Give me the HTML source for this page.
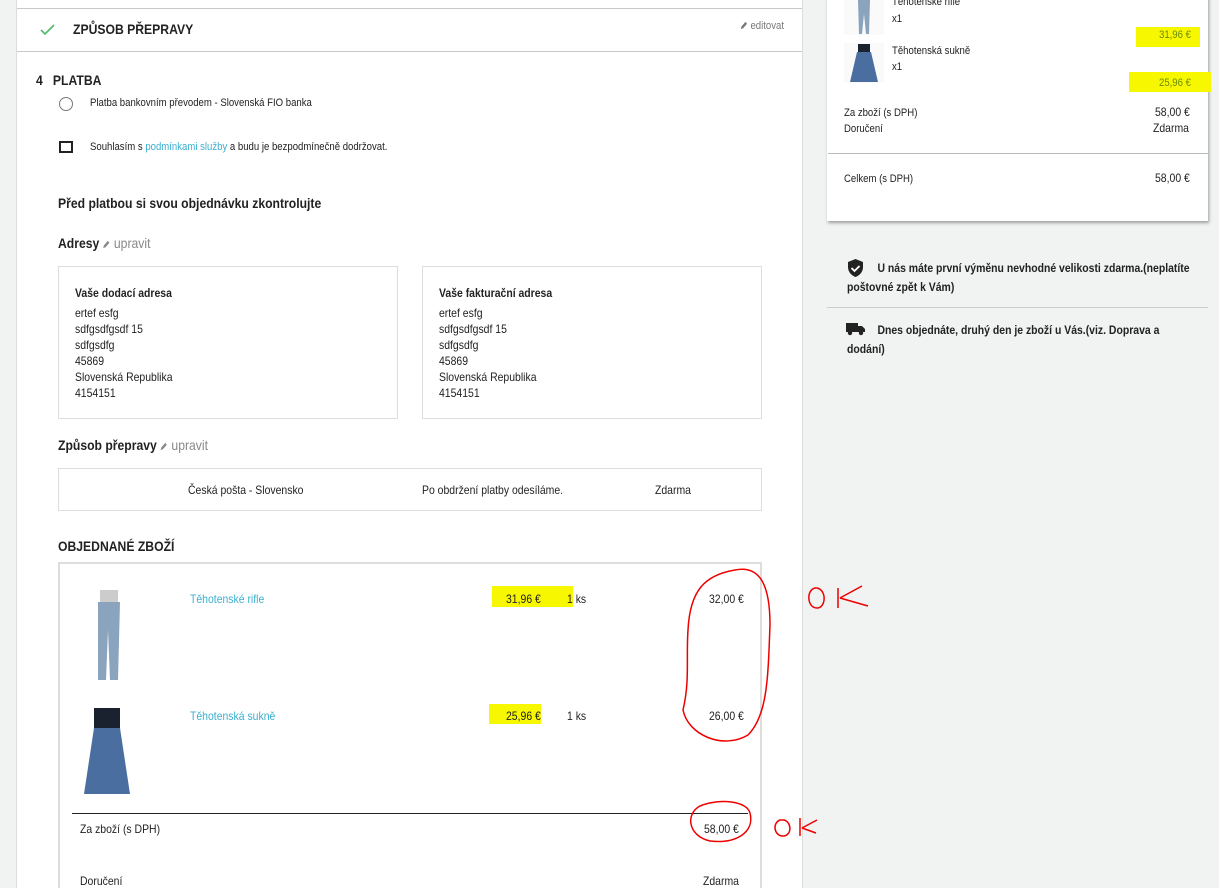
<!DOCTYPE html>
<html><head><meta charset="utf-8"><style>
*{margin:0;padding:0;box-sizing:border-box}
html,body{width:1219px;height:888px;overflow:hidden}
body{background:#f1f2f2;font-family:"Liberation Sans",sans-serif;color:#222;position:relative}
.a{position:absolute;white-space:nowrap;transform:scaleX(.87);transform-origin:left top}
.n{transform:none}
.main{position:absolute;left:16px;top:0;width:787px;height:888px;background:#fff;border-left:1px solid #ddd;border-right:1px solid #ddd}
.b{font-weight:bold}
.box{position:absolute;border:1px solid #ddd;background:#fff}
.link{color:#3bb0d0}
.hl{background:#f7f700}
.s11{font-size:11px}.s12{font-size:12px}.s13{font-size:13px}.s14{font-size:14px}
.pen{display:inline-block;width:9px;height:9px;vertical-align:-1px}
</style></head><body>
<div class="main">
 <div style="position:absolute;left:0;right:0;top:8px;border-top:1px solid #c8c8c8"></div>
 <div style="position:absolute;left:0;right:0;top:51px;border-top:1px solid #c8c8c8"></div>
</div>
<svg class="a n" style="left:40px;top:24px" width="16" height="12" viewBox="0 0 16 12"><path d="M1 6l4 4 9-9" fill="none" stroke="#4cbb6c" stroke-width="1.6"/></svg>
<div class="a b s14" style="left:73px;top:21px">ZPŮSOB PŘEPRAVY</div>
<div class="a s11" style="left:740px;top:20px;color:#777"><svg class="pen" viewBox="0 0 10 10"><path d="M1 9l1-3 5-5 2 2-5 5z" fill="#777"/></svg> editovat</div>
<div class="a b s14" style="left:36px;top:72px">4&nbsp;&nbsp; PLATBA</div>
<div class="a n" style="left:59px;top:97px;width:14px;height:14px;border:1.5px solid #777;border-radius:50%"></div>
<div class="a s11" style="left:90px;top:97px">Platba bankovním převodem - Slovenská FIO banka</div>
<div class="a n" style="left:59px;top:141px;width:14px;height:12px;border:2px solid #222"></div>
<div class="a s11" style="left:90px;top:141px">Souhlasím s <span class="link">podmínkami služby</span> a budu je bezpodmínečně dodržovat.</div>
<div class="a b s14" style="left:58px;top:195px">Před platbou si svou objednávku zkontrolujte</div>
<div class="a s14" style="left:58px;top:235px"><b>Adresy</b> <span style="color:#888"><svg class="pen" viewBox="0 0 10 10"><path d="M1 9l1-3 5-5 2 2-5 5z" fill="#888"/></svg> upravit</span></div>
<div class="box" style="left:58px;top:266px;width:340px;height:153px"></div>
<div class="box" style="left:422px;top:266px;width:340px;height:153px"></div>
<div class="a s12" style="left:75px;top:285px;line-height:16px"><b>Vaše dodací adresa</b><br><div style="height:4px"></div>ertef esfg<br>sdfgsdfgsdf 15<br>sdfgsdfg<br>45869<br>Slovenská Republika<br>4154151</div>
<div class="a s12" style="left:439px;top:285px;line-height:16px"><b>Vaše fakturační adresa</b><br><div style="height:4px"></div>ertef esfg<br>sdfgsdfgsdf 15<br>sdfgsdfg<br>45869<br>Slovenská Republika<br>4154151</div>
<div class="a s14" style="left:58px;top:437px"><b>Způsob přepravy</b> <span style="color:#888"><svg class="pen" viewBox="0 0 10 10"><path d="M1 9l1-3 5-5 2 2-5 5z" fill="#888"/></svg> upravit</span></div>
<div class="box" style="left:58px;top:468px;width:704px;height:43px"></div>
<div class="a s12" style="left:188px;top:483px">Česká pošta - Slovensko</div>
<div class="a s12" style="left:422px;top:483px">Po obdržení platby odesíláme.</div>
<div class="a s12" style="left:655px;top:483px">Zdarma</div>
<div class="a b s14" style="left:58px;top:538px">OBJEDNANÉ ZBOŽÍ</div>
<div class="box" style="left:58px;top:562px;width:704px;height:340px;border-width:2px;border-bottom:none"></div>
<svg class="a n" style="left:88px;top:590px" width="42" height="92" viewBox="0 0 42 92"><rect x="12" y="0" width="18" height="14" fill="#ccc"/><path d="M10 12h22l-2 78h-8l-2-50-2 50h-8z" fill="#8aa4bd"/></svg>
<svg class="a n" style="left:84px;top:708px" width="46" height="92" viewBox="0 0 46 92"><rect x="10" y="0" width="26" height="20" fill="#1a2230"/><path d="M10 20h26l10 66h-46z" fill="#4a6ea0"/></svg>
<div class="a s12 link" style="left:190px;top:592px">Těhotenské rifle</div>
<div class="a n hl" style="left:492px;top:586px;width:81px;height:21px"></div>
<div class="a s12" style="left:506px;top:592px">31,96 €</div>
<div class="a s12" style="left:567px;top:592px">1 ks</div>
<div class="a s12" style="left:709px;top:592px">32,00 €</div>
<div class="a s12 link" style="left:190px;top:709px">Těhotenská sukně</div>
<div class="hl a n" style="left:489px;top:704px;width:52px;height:20px"></div>
<div class="a s12" style="left:506px;top:709px">25,96 €</div>
<div class="a s12" style="left:567px;top:709px">1 ks</div>
<div class="a s12" style="left:709px;top:709px">26,00 €</div>
<div class="a n" style="left:72px;top:813px;width:676px;border-top:1px solid #222"></div>
<div class="a s12" style="left:80px;top:822px">Za zboží (s DPH)</div>
<div class="a s12" style="left:704px;top:822px">58,00 €</div>
<div class="a s12" style="left:80px;top:874px">Doručení</div>
<div class="a s12" style="left:703px;top:874px">Zdarma</div>
<svg class="a n" style="left:680px;top:565px" width="200" height="290" viewBox="680 565 200 290" fill="none" stroke="#e00" stroke-width="1.5">
<path d="M735 570c-30 5-45 20-47 60-2 30 2 50-5 80 5 25 40 40 65 25 20-20 20-60 22-110 0-40-10-60-35-55z"/>
<path d="M700 806c-15 8-12 30 10 35 25 3 45-8 40-28-3-12-30-15-50-7z"/>
<path d="M815 588c-9 2-8 20 2 20 9 0 10-18 0-20zM838 588v20M840 598l22-12M840 598l28 8"/>
<path d="M780 820c-8 3-6 16 3 16 9 0 9-14 1-16zM800 818v18M802 828l15-8M802 828l14 5"/>
</svg>
<!-- sidebar -->
<div class="a n" style="left:827px;top:-5px;width:381px;height:226px;background:#fff;box-shadow:1px 2px 3px rgba(0,0,0,.35)"></div>
<div class="a n" style="left:844px;top:0;width:40px;height:35px;background:#fafafa"></div>
<svg class="a n" style="left:852px;top:0" width="24" height="35" viewBox="0 0 24 35"><path d="M6 0h12l-1 34h-3l-2-20-2 20h-3z" fill="#8aa4bd"/></svg>
<div class="a s11" style="left:892px;top:-4px">Těhotenské rifle</div>
<div class="a s11" style="left:892px;top:13px">x1</div>
<div class="hl a n" style="left:1136px;top:27px;width:64px;height:20px"></div>
<div class="a s11" style="left:1159px;top:29px;color:#6a8c00">31,96 €</div>
<div class="a n" style="left:844px;top:43px;width:40px;height:40px;background:#fafafa"></div>
<svg class="a n" style="left:848px;top:44px" width="32" height="38" viewBox="0 0 32 38"><rect x="10" y="0" width="12" height="10" fill="#1a2230"/><path d="M9 8h14l7 30h-28z" fill="#4a6ea0"/></svg>
<div class="a s11" style="left:892px;top:45px">Těhotenská sukně</div>
<div class="a s11" style="left:892px;top:61px">x1</div>
<div class="hl a n" style="left:1129px;top:72px;width:82px;height:20px"></div>
<div class="a s11" style="left:1159px;top:77px;color:#6a8c00">25,96 €</div>
<div class="a s11" style="left:844px;top:107px">Za zboží (s DPH)</div>
<div class="a s12" style="left:1155px;top:105px">58,00 €</div>
<div class="a s11" style="left:844px;top:123px">Doručení</div>
<div class="a s12" style="left:1153px;top:121px">Zdarma</div>
<div class="a n" style="left:828px;top:153px;width:380px;border-top:1px solid #bbb"></div>
<div class="a s11" style="left:844px;top:173px">Celkem (s DPH)</div>
<div class="a s12" style="left:1155px;top:171px">58,00 €</div>
<svg class="a n" style="left:847px;top:259px" width="17" height="18" viewBox="0 0 17 18"><path d="M8.5 0L16 3v5c0 5-3.5 8.5-7.5 10C4.5 16.5 1 13 1 8V3z" fill="#222"/><path d="M4.5 9l3 3 5-5" fill="none" stroke="#fff" stroke-width="1.8"/></svg>
<div class="a b s12" style="left:847px;top:259px;width:400px;white-space:normal;line-height:19px;text-indent:35px">U nás máte první výměnu nevhodné velikosti zdarma.(neplatíte poštovné zpět k Vám)</div>
<div class="a n" style="left:827px;top:307px;width:381px;border-top:1px solid #ccc"></div>
<svg class="a n" style="left:846px;top:322px" width="19" height="14" viewBox="0 0 19 14"><rect x="0" y="1" width="12" height="9" fill="#222"/><path d="M12 4h4l3 3v3h-7z" fill="#222"/><circle cx="4" cy="11" r="2.2" fill="#222"/><circle cx="15" cy="11" r="2.2" fill="#222"/></svg>
<div class="a b s12" style="left:847px;top:321px;width:370px;white-space:normal;line-height:19px;text-indent:35px">Dnes objednáte, druhý den je zboží u Vás.(viz. Doprava a dodání)</div>
</body></html>
